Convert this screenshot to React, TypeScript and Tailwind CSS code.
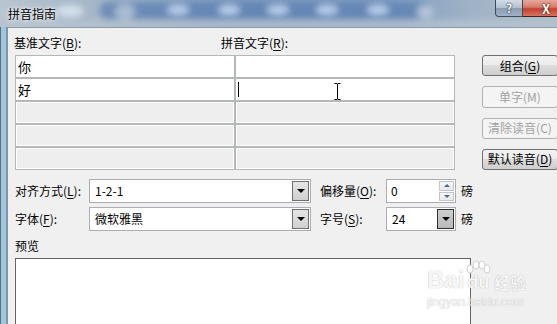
import React from "react"

function Acc({ text, k, colon = true }: { text: string; k: string; colon?: boolean }) {
  return (
    <span className="whitespace-nowrap">
      {text}(<span className="underline underline-offset-[2px]">{k}</span>){colon ? ":" : ""}
    </span>
  )
}

function DropBtn({ dark }: { dark?: boolean }) {
  return (
    <div
      className={
        dark
          ? "flex h-full w-[17px] shrink-0 items-center justify-center border border-[#2f2f2f] bg-[linear-gradient(#cfcfcf,#b9b9b9)]"
          : "flex h-full w-[17px] shrink-0 items-center justify-center border border-[#6f6f6f] bg-[linear-gradient(#e6e6e6,#d0d0d0)]"
      }
    >
      <div className="h-0 w-0 border-x-[4px] border-t-[4px] border-x-transparent border-t-black" />
    </div>
  )
}

function Combo({ value, w, dark }: { value: string; w: string; dark?: boolean }) {
  return (
    <div className={`flex h-[24px] ${w} shrink-0 items-stretch border border-[#abadb3] bg-white p-[1px]`}>
      <div className="flex flex-1 items-center pl-[4px] text-[12px] leading-[14px]">{value}</div>
      <DropBtn dark={dark} />
    </div>
  )
}

function Spin({ value }: { value: string }) {
  return (
    <div className="flex h-[24px] w-[70px] shrink-0 items-stretch border border-[#abadb3] bg-white p-[1px]">
      <div className="flex flex-1 items-center pl-[3px] text-[12px] leading-[14px]">{value}</div>
      <div className="flex w-[15px] flex-col gap-px">
        <div className="flex flex-1 items-center justify-center border border-[#c2c6cb] bg-[linear-gradient(#f7f7f7,#e8e8e8)]">
          <div className="h-0 w-0 border-x-[3px] border-b-[3px] border-x-transparent border-b-[#4e6791]" />
        </div>
        <div className="flex flex-1 items-center justify-center border border-[#c2c6cb] bg-[linear-gradient(#f7f7f7,#e8e8e8)]">
          <div className="h-0 w-0 border-x-[3px] border-t-[3px] border-x-transparent border-t-[#4e6791]" />
        </div>
      </div>
    </div>
  )
}

function TitleGlass() {
  return (
    <svg className="absolute inset-0" width="557" height="27" viewBox="0 0 557 27">
      <defs>
        <linearGradient id="tbg" x1="0" x2="1" y1="0" y2="0">
          <stop offset="0" stopColor="#b9c5d0" />
          <stop offset="0.18" stopColor="#a3b5c7" />
          <stop offset="0.4" stopColor="#7f9cc0" />
          <stop offset="0.7" stopColor="#819ec2" />
          <stop offset="0.85" stopColor="#a0b3c6" />
          <stop offset="1" stopColor="#aebdca" />
        </linearGradient>
        <filter id="blr" x="-50%" y="-50%" width="200%" height="200%">
          <feGaussianBlur stdDeviation="3" />
        </filter>
      </defs>
      <rect width="557" height="27" fill="url(#tbg)" />
      <g filter="url(#blr)">
        <rect x="100" y="2" width="330" height="18" rx="8" fill="#587db0" opacity="0.7" />
        <ellipse cx="70" cy="11" rx="14" ry="6" fill="#d4e0ec" />
        <ellipse cx="125" cy="12" rx="10" ry="8" fill="#b8c8da" opacity="0.8" />
        <ellipse cx="178" cy="10" rx="11" ry="5" fill="#b5cdea" />
        <ellipse cx="229" cy="10" rx="11" ry="5" fill="#b5cdea" />
        <ellipse cx="278" cy="10" rx="11" ry="5" fill="#b5cdea" />
        <ellipse cx="327" cy="10" rx="11" ry="5" fill="#b5cdea" />
        <ellipse cx="378" cy="10" rx="11" ry="5" fill="#b5cdea" />
        <ellipse cx="425" cy="12" rx="8" ry="7" fill="#c5d2de" opacity="0.8" />
        <rect x="0" y="20" width="557" height="10" fill="#b7c4d0" opacity="0.8" />
      </g>
    </svg>
  )
}

export default function App() {
  const rows = [
    { base: "你", active: true, caret: false },
    { base: "好", active: true, caret: true },
    { base: "", active: false, caret: false },
    { base: "", active: false, caret: false },
    { base: "", active: false, caret: false },
  ]

  return (
    <div className="relative h-[324px] w-[557px] overflow-hidden bg-[#f0f0f0] text-[12px] text-black [font-family:'Noto_Sans_CJK_SC','Noto_Sans',sans-serif]">
      {/* Title bar */}
      <div className="relative flex h-[27px] items-start">
        <TitleGlass />
        <span className="relative ml-[8px] mt-[6px] text-[12px] leading-[15px] [text-shadow:0_0_6px_#ffffff,0_0_3px_#ffffff]">
          拼音指南
        </span>
        <div className="relative ml-auto mr-[-9px] flex shrink-0">
          <div className="flex h-[17px] w-[28px] items-center justify-center rounded-bl-[4px] border border-t-0 border-[#3d4b5a] bg-[linear-gradient(#d3dce5_0%,#b2c0ce_50%,#8b9db0_51%,#9fb3c6_100%)] text-[12px] font-bold leading-none text-white [text-shadow:0_0_2px_#1c2a3a,0_0_1px_#1c2a3a]">
            ?
          </div>
          <div className="flex h-[17px] w-[43px] items-center justify-center rounded-br-[4px] border border-l-0 border-t-0 border-[#4a1f1a] bg-[linear-gradient(#e8a89c_0%,#d57a6a_45%,#c2402f_55%,#d9735f_100%)] pl-[4px] text-[13px] font-bold leading-none text-white [text-shadow:0_0_2px_#3a0f0a,0_0_1px_#3a0f0a]">
            X
          </div>
        </div>
      </div>

      <div className="flex h-[297px]">
        {/* left window frame */}
        <div className="w-[8px] shrink-0 border-l border-r-2 border-l-[#5c6e7e] border-r-[#7b97ab] bg-[#9fc6dc]" />

        {/* client area */}
        <div className="flex-1 overflow-hidden border-t border-[#8b9aa8] pl-[7px] pt-[8px]">
          <div className="flex h-[134px]">
            <div className="w-[440px] shrink-0">
              <div className="flex h-[14px] leading-[14px]">
                <span className="-ml-px w-[207px]">
                  <Acc text="基准文字" k="B" />
                </span>
                <Acc text="拼音文字" k="R" />
              </div>
              <div className="mt-[5px] grid grid-cols-2 gap-[2px] bg-[#b4b8b6] p-px">
                {rows.map((r, i) => (
                  <React.Fragment key={i}>
                    <div
                      className={
                        r.active
                          ? "h-[21px] bg-white pl-[2px] text-[13px] leading-[21px]"
                          : "h-[21px] border border-white bg-[#eeeeee]"
                      }
                    >
                      {r.base}
                    </div>
                    <div
                      className={
                        r.active
                          ? "relative flex h-[21px] items-center bg-white pl-[2px]"
                          : "h-[21px] border border-white bg-[#eeeeee]"
                      }
                    >
                      {r.caret && (
                        <>
                          <div className="h-[15px] w-px bg-black" />
                          <svg className="absolute left-[98px] top-[4px]" width="7" height="17" viewBox="0 0 7 17">
                            <path d="M0.5 0.5H3l0.5 0.5L4 0.5h2.5M3.5 1v15M0.5 16.5H3l0.5-0.5 0.5 0.5h2.5" stroke="#000" strokeWidth="1" fill="none" />
                          </svg>
                        </>
                      )}
                    </div>
                  </React.Fragment>
                ))}
              </div>
            </div>

            {/* buttons */}
            <div className="ml-[27px] flex w-[76px] shrink-0 flex-col gap-[10px] pt-[19px]">
              <div className="flex h-[24px] items-center justify-center rounded-[3px] border border-[#707070] bg-[linear-gradient(#f2f2f2_0%,#ebebeb_50%,#dddddd_50%,#cfcfcf_100%)] leading-[14px]">
                <Acc text="组合" k="G" colon={false} />
              </div>
              <div className="flex h-[24px] items-center justify-center rounded-[3px] border border-[#adb2b5] bg-[#f4f4f4] leading-[14px] text-[#a3a3a3]">
                单字(M)
              </div>
              <div className="flex h-[24px] items-center justify-center rounded-[3px] border border-[#adb2b5] bg-[#f4f4f4] leading-[14px] text-[#a3a3a3]">
                清除读音(C)
              </div>
              <div className="flex h-[24px] items-center justify-center rounded-[3px] border border-[#707070] bg-[linear-gradient(#f2f2f2_0%,#ebebeb_50%,#dddddd_50%,#cfcfcf_100%)] leading-[14px]">
                <Acc text="默认读音" k="D" colon={false} />
              </div>
            </div>
          </div>

          {/* alignment / font rows */}
          <div className="mt-[9px] flex flex-col gap-[4px] leading-[14px]">
            <div className="flex h-[24px] items-center">
              <span className="w-[74px] shrink-0">
                <Acc text="对齐方式" k="L" />
              </span>
              <Combo value="1-2-1" w="w-[222px]" />
              <span className="ml-[9px] w-[66px] shrink-0">
                <Acc text="偏移量" k="O" />
              </span>
              <Spin value="0" />
              <span className="ml-[5px]">磅</span>
            </div>
            <div className="flex h-[24px] items-center">
              <span className="w-[74px] shrink-0">
                <Acc text="字体" k="F" />
              </span>
              <Combo value="微软雅黑" w="w-[222px]" />
              <span className="ml-[9px] w-[66px] shrink-0">
                <Acc text="字号" k="S" />
              </span>
              <Combo value="24" w="w-[70px]" dark />
              <span className="ml-[5px]">磅</span>
            </div>
          </div>

          <div className="mt-[8px] h-[14px] leading-[14px]">预览</div>
          <div className="mt-[5px] h-[80px] w-[456px] border border-[#646464] bg-white" />
        </div>
      </div>

      {/* watermark */}
      <div className="pointer-events-none absolute left-[427px] top-[260px] flex flex-col text-white/90 [text-shadow:0_0_1px_rgba(0,0,0,0.35)]">
        <div className="flex items-end">
          <span className="text-[24px] font-bold leading-[24px] [font-family:'Liberation_Sans',sans-serif]">Bai</span>
          <div className="relative ml-[1px] flex flex-col items-center">
            <svg width="26" height="14" viewBox="0 0 26 14" className="mb-[-2px]">
              <g fill="#ffffff" stroke="#cfcfcf" strokeWidth="1">
                <ellipse cx="5" cy="9" rx="3" ry="4" />
                <ellipse cx="11" cy="5" rx="3" ry="4" />
                <ellipse cx="17" cy="5" rx="3" ry="4" />
                <ellipse cx="22" cy="9" rx="3" ry="4" />
              </g>
            </svg>
            <span className="text-[18px] font-bold leading-[20px] [font-family:'Liberation_Sans',sans-serif]">du</span>
          </div>
          <span className="ml-[3px] text-[16px] font-bold leading-[20px]">经验</span>
        </div>
        <span className="mt-[3px] text-[12px] leading-[14px] [font-family:'Liberation_Sans',sans-serif]">jingyan.baidu.com</span>
      </div>
    </div>
  )
}
